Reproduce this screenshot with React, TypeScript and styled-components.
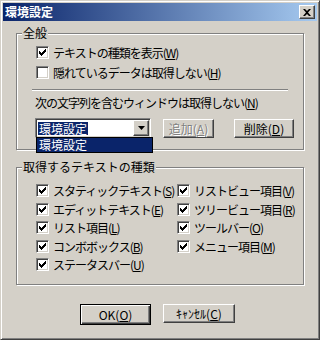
import React from "react";
import styled, { createGlobalStyle, css } from "styled-components";

const GlobalStyle = createGlobalStyle`
  html, body {
    margin: 0;
    padding: 0;
    background: #d4d0c8;
  }
  body {
    font-family: "Noto Sans CJK JP", "MS UI Gothic", sans-serif;
    font-size: 12px;
    letter-spacing: -1px;
    color: #000;
  }
`;

const raised = css`
  border: 1px solid;
  border-color: #fff #404040 #404040 #fff;
  box-shadow: inset -1px -1px 0 #808080, inset 1px 1px 0 #d4d0c8;
`;

const sunken = css`
  border: 1px solid;
  border-color: #808080 #fff #fff #808080;
  box-shadow: inset 1px 1px 0 #404040, inset -1px -1px 0 #d4d0c8;
`;

const Window = styled.div`
  width: 320px;
  height: 340px;
  box-sizing: border-box;
  border: 1px solid;
  border-color: #d4d0c8 #404040 #404040 #d4d0c8;
  box-shadow: inset 1px 1px 0 #fff, inset -1px -1px 0 #808080;
  padding: 2px;
  background: #d4d0c8;
  display: flex;
  flex-direction: column;
`;

const TitleBar = styled.div`
  height: 18px;
  display: flex;
  align-items: center;
  justify-content: space-between;
  padding: 0 2px 0 2px;
  background: linear-gradient(to right, #0a246a, #a6caf0);
`;

const Title = styled.span`
  color: #fff;
  font-weight: bold;
  font-size: 12px;
  letter-spacing: 0;
  line-height: 18px;
`;

const CloseButton = styled.div`
  ${raised};
  width: 16px;
  height: 14px;
  box-sizing: border-box;
  background: #d4d0c8;
  display: flex;
  align-items: center;
  justify-content: center;
`;

const Body = styled.div`
  padding: 12px 0 0 13px;
  display: flex;
  flex-direction: column;
`;

const Group = styled.div<{ $h: number; $mt?: number }>`
  position: relative;
  width: 288px;
  height: ${(p) => p.$h}px;
  box-sizing: border-box;
  margin-top: ${(p) => p.$mt ?? 0}px;
  border: 1px solid #808080;
  box-shadow: inset 1px 1px 0 #fff, 1px 1px 0 #fff;
`;

const GroupLabel = styled.span`
  position: absolute;
  top: -8px;
  left: 5px;
  padding: 0 1px;
  background: #d4d0c8;
  line-height: 14px;
  letter-spacing: 0;
`;

const GroupInner = styled.div<{ $pt: number }>`
  padding: ${(p) => p.$pt}px 0 0 19px;
  display: flex;
  flex-direction: column;
`;

const CheckRow = styled.div`
  display: flex;
  align-items: center;
  gap: 4px;
  height: 13px;
  white-space: nowrap;
  line-height: 13px;
`;

const Box = styled.span`
  ${sunken};
  position: relative;
  width: 13px;
  height: 13px;
  box-sizing: border-box;
  background: #fff;
  display: flex;
  align-items: center;
  justify-content: center;
  flex: none;
`;

const Separator = styled.div`
  width: 256px;
  height: 1px;
  margin: 10px 0 0 -4px;
  background: #808080;
  box-shadow: 0 1px 0 #fff;
`;

const FieldLabel = styled.div`
  margin: 6px 0 0 -1px;
  line-height: 14px;
  white-space: nowrap;
`;

const ComboRow = styled.div`
  display: flex;
  align-items: center;
  margin: 8px 0 0 -1px;
`;

const Combo = styled.div`
  ${sunken};
  position: relative;
  width: 116px;
  height: 20px;
  box-sizing: border-box;
  background: #fff;
  display: flex;
  align-items: center;
  padding: 0 2px;
  justify-content: space-between;
`;

const Selected = styled.span`
  background: #0a246a;
  color: #fff;
  line-height: 13px;
  padding: 0 1px;
  letter-spacing: 0;
`;

const DropButton = styled.span`
  ${raised};
  width: 16px;
  height: 16px;
  box-sizing: border-box;
  background: #d4d0c8;
  display: flex;
  align-items: center;
  justify-content: center;
  margin-right: -1px;
`;

const DropList = styled.div`
  position: absolute;
  top: 18px;
  left: 0;
  width: 117px;
  height: 16px;
  box-sizing: border-box;
  border: 1px solid #000;
  background: #0a246a;
  color: #fff;
  line-height: 14px;
  padding-left: 2px;
  letter-spacing: 0;
  z-index: 2;
`;

const PushButton = styled.div<{ $w: number; $ml: number; $disabled?: boolean; $default?: boolean }>`
  ${raised};
  width: ${(p) => p.$w}px;
  height: ${(p) => (p.$default ? 21 : 19)}px;
  box-sizing: border-box;
  margin-left: ${(p) => p.$ml}px;
  background: #d4d0c8;
  display: flex;
  align-items: center;
  justify-content: center;
  white-space: nowrap;
  letter-spacing: 0;
  color: ${(p) => (p.$disabled ? "#808080" : "#000")};
  text-shadow: ${(p) => (p.$disabled ? "1px 1px 0 #fff" : "none")};
  ${(p) =>
    p.$default &&
    css`
      border: 1px solid #000;
      box-shadow: inset 1px 1px 0 #fff, inset -1px -1px 0 #404040,
        inset -2px -2px 0 #808080;
    `}
`;

const ChecksGrid = styled.div`
  display: grid;
  grid-template-columns: 137px auto;
  column-gap: 4px;
  grid-auto-rows: 18.5px;
  align-items: start;
`;

const Footer = styled.div`
  display: flex;
  padding: 19px 0 0 64px;
`;

const Check = () => (
  <svg width="7" height="7" viewBox="0 0 7 7">
    <path d="M0 2h1v1h1v1h1v-1h1v-1h1v-1h1v-1h1v3h-1v1h-1v1h-1v1h-1v1h-1v-1h-1v-1h-1v-1h-1z" fill="#000" />
  </svg>
);

type CBProps = { checked?: boolean; label: string; k: string };

const CheckBox: React.FC<CBProps> = ({ checked = true, label, k }) => (
  <CheckRow>
    <Box>{checked && <Check />}</Box>
    <span>
      {label}(<u>{k}</u>)
    </span>
  </CheckRow>
);

const kinds: [string, string][] = [
  ["スタティックテキスト", "S"],
  ["リストビュー項目", "V"],
  ["エディットテキスト", "E"],
  ["ツリービュー項目", "R"],
  ["リスト項目", "L"],
  ["ツールバー", "O"],
  ["コンボボックス", "B"],
  ["メニュー項目", "M"],
  ["ステータスバー", "U"],
];

export default function App() {
  return (
    <>
      <GlobalStyle />
      <Window>
        <TitleBar>
          <Title>環境設定</Title>
          <CloseButton>
            <svg width="8" height="7" viewBox="0 0 8 7">
              <path d="M0 0h2l2 2 2-2h2l-3 3.5 3 3.5h-2l-2-2-2 2h-2l3-3.5z" fill="#000" />
            </svg>
          </CloseButton>
        </TitleBar>
        <Body>
          <Group $h={117}>
            <GroupLabel>全般</GroupLabel>
            <GroupInner $pt={12}>
              <CheckBox label="テキストの種類を表示" k="W" />
              <div style={{ height: 7 }} />
              <CheckBox checked={false} label="隠れているデータは取得しない" k="H" />
              <Separator />
              <FieldLabel>
                次の文字列を含むウィンドウは取得しない(<u>N</u>)
              </FieldLabel>
              <ComboRow>
                <Combo>
                  <Selected>環境設定</Selected>
                  <DropButton>
                    <svg width="7" height="4" viewBox="0 0 7 4">
                      <path d="M0 0h7l-3.5 4z" fill="#000" />
                    </svg>
                  </DropButton>
                  <DropList>環境設定</DropList>
                </Combo>
                <PushButton $w={51} $ml={12} $disabled>
                  追加(<u>A</u>)
                </PushButton>
                <PushButton $w={60} $ml={20}>
                  削除(<u>D</u>)
                </PushButton>
              </ComboRow>
            </GroupInner>
          </Group>
          <Group $h={118} $mt={17}>
            <GroupLabel>取得するテキストの種類</GroupLabel>
            <GroupInner $pt={16}>
              <ChecksGrid>
                {kinds.map(([l, k]) => (
                  <CheckBox key={k} label={l} k={k} />
                ))}
              </ChecksGrid>
            </GroupInner>
          </Group>
          <Footer>
            <PushButton $w={71} $ml={0} $default>
              OK(<u>O</u>)
            </PushButton>
            <PushButton $w={72} $ml={12}>
              ｷｬﾝｾﾙ(<u>C</u>)
            </PushButton>
          </Footer>
        </Body>
      </Window>
    </>
  );
}
